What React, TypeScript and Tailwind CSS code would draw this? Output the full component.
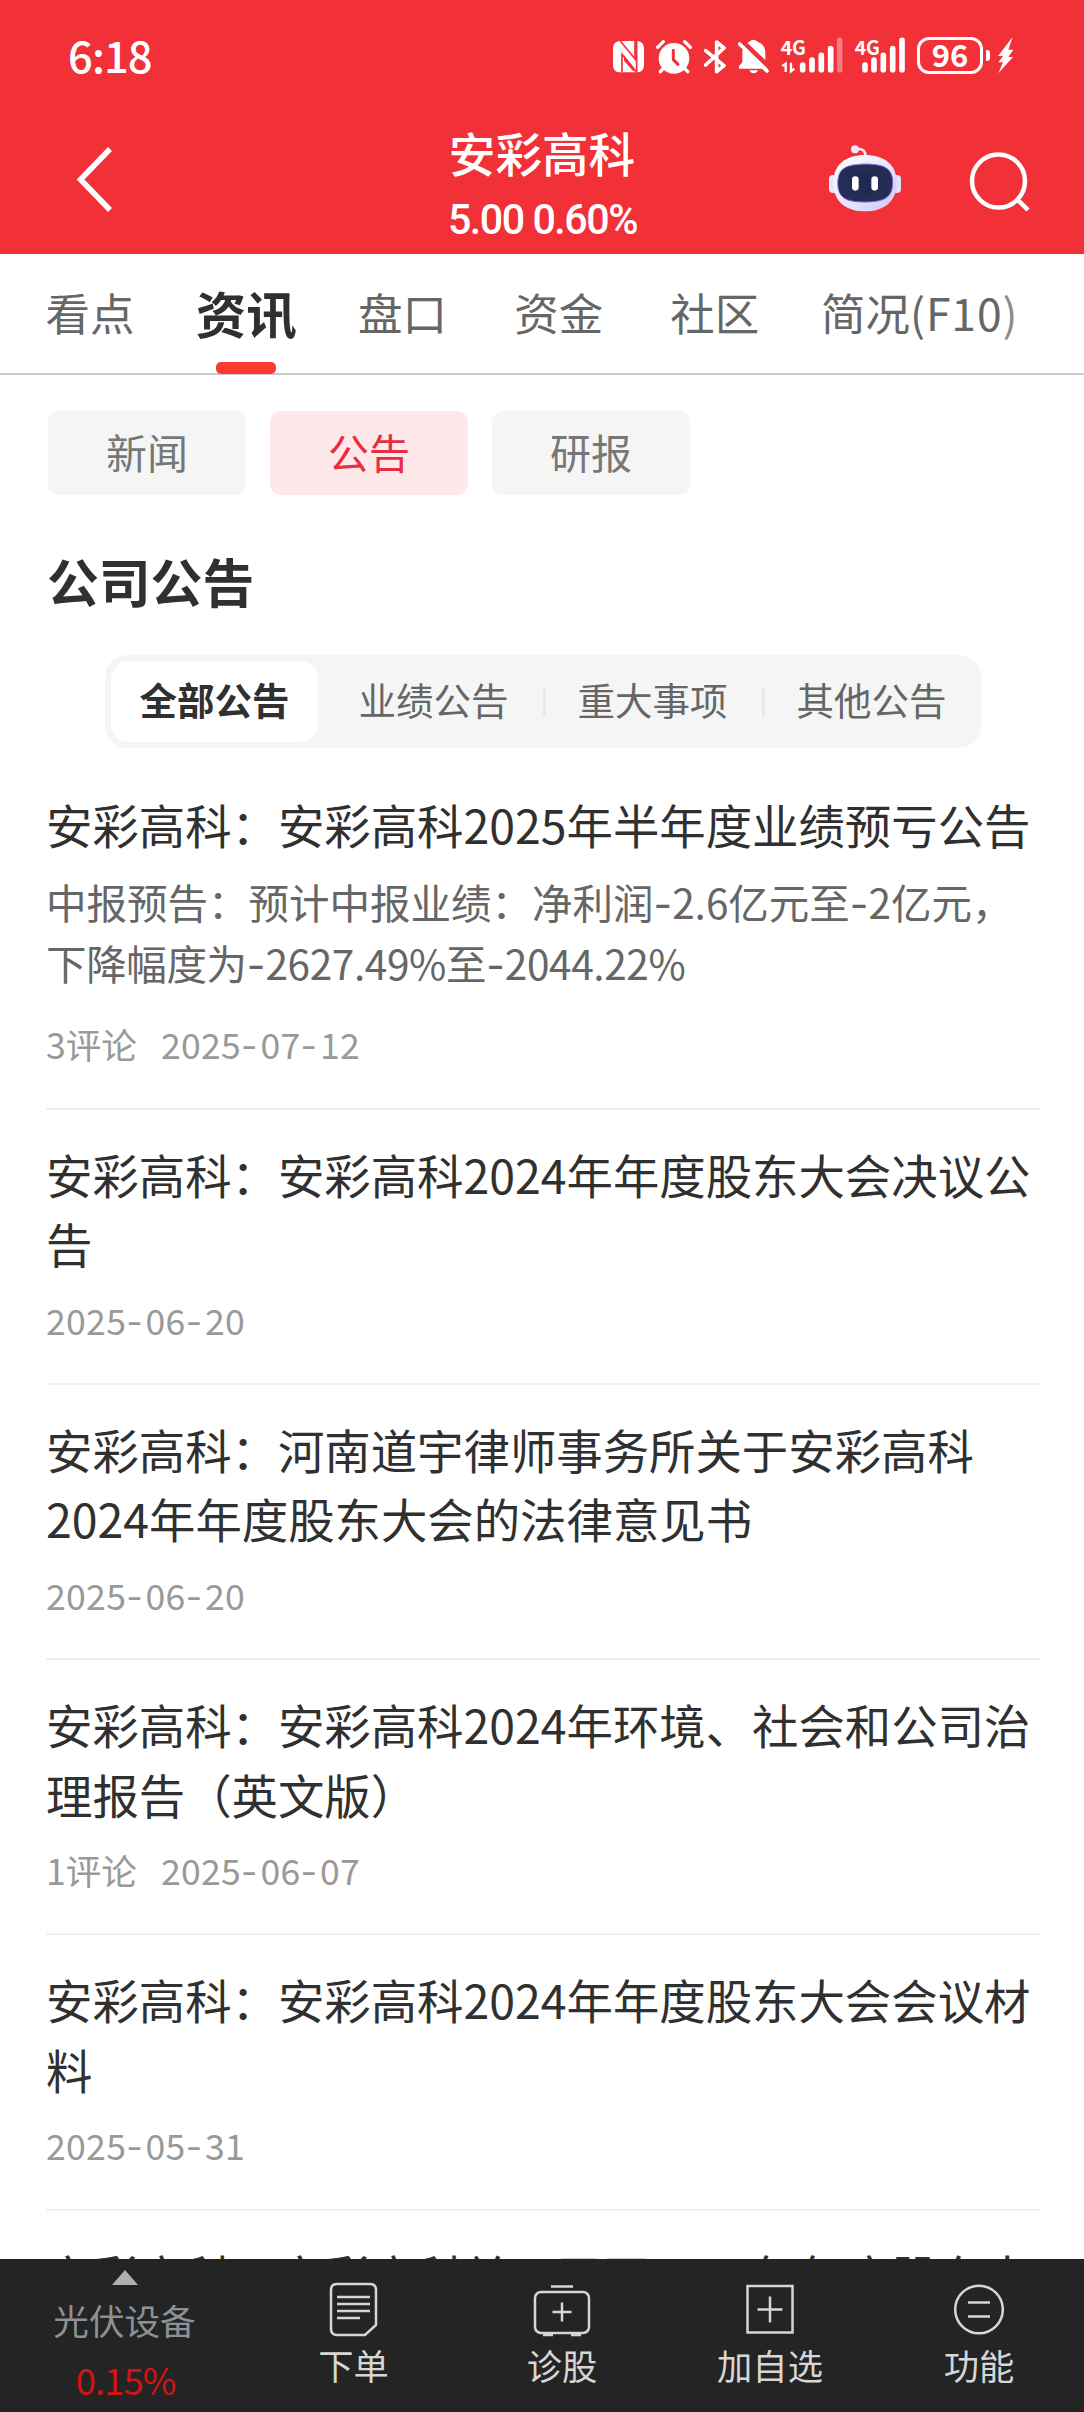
import React from "react";

const Hy = ({ s }: { s: string }) => (
  <span className={`font-['Inter'] leading-none ${s}`}>-</span>
);

const withHyphens = (t: string, s: string) =>
  t.split("-").map((p, i) => (
    <React.Fragment key={i}>
      {i > 0 && <Hy s={s} />}
      {p}
    </React.Fragment>
  ));

function StatusBar() {
  return (
    <div className="flex h-[104px] items-start pl-[68px] pt-[36px] text-white">
      <div className="-mt-[1px] h-[41px] w-[545px] text-[43.500px] font-medium leading-[40px] tracking-[-0.900px]">6:18</div>
      <svg className="mt-[4px] h-[33px] w-[31px]" viewBox="0 0 93 99">
        <rect x="0" y="3" width="93" height="94" rx="20" fill="#fff" />
        <path d="M22 3L66 57V3M71 3V97L27 43V97" fill="none" stroke="#f23037" strokeWidth="5" />
        <path d="M33 46L62 82V95L33 62z" fill="#f23037" />
      </svg>
      <svg className="ml-[12px] mt-[3px] h-[35px] w-[36px]" viewBox="0 0 108 105">
        <circle cx="54" cy="58" r="46" fill="#fff" />
        <path d="M5 25L22 8M103 25L86 8M24 86L13 98M84 86l11 12" stroke="#fff" strokeWidth="10" strokeLinecap="round" />
        <path d="M52 34v28l14 14" fill="none" stroke="#f23037" strokeWidth="9" strokeLinecap="round" />
      </svg>
      <svg className="ml-[12px] mt-[3px] h-[35px] w-[22px]" viewBox="0 0 66 105">
        <path d="M5 35L60 80 38 98V9L60 27 5 78" fill="none" stroke="#fff" strokeWidth="11" strokeLinecap="round" strokeLinejoin="round" />
      </svg>
      <svg className="ml-[12px] mt-[3px] h-[35px] w-[31px]" viewBox="0 0 93 105">
        <path d="M3 89V82L13 70V38Q15 14 34 8Q46-4 59 8Q82 16 82 42V68L90 82V89z" fill="#fff" />
        <path d="M10 4L95 85" stroke="#f23037" strokeWidth="14" />
        <path d="M5 15L87 96" stroke="#fff" strokeWidth="11" strokeLinecap="round" />
        <path d="M34 94h26q-4 9-13 9t-13-9" fill="#fff" />
      </svg>
      <svg className="ml-[12px] mt-[1px] h-[37px] w-[62px] overflow-visible" viewBox="0 0 186 111">
        <text x="-1" y="54" fontSize="59" fontWeight="700" fill="#fff" textLength="76" lengthAdjust="spacingAndGlyphs">4G</text>
        <path d="M14 105V80L4 87M30 77v26l10-8" fill="none" stroke="#fff" strokeWidth="7" />
        <path d="M65 84v14M93 69v29M121 55v43M149 35v63" stroke="#fff" strokeWidth="17" strokeLinecap="round" />
        <path d="M176 10v88" stroke="#f97a7f" strokeWidth="17" strokeLinecap="round" />
      </svg>
      <svg className="ml-[12px] mt-[1px] h-[37px] w-[50px] overflow-visible" viewBox="0 0 150 111">
        <text x="-1" y="54" fontSize="59" fontWeight="700" fill="#fff" textLength="76" lengthAdjust="spacingAndGlyphs">4G</text>
        <path d="M30 84v14M57 69v29M85 55v43M113 35v63M141 10v88" stroke="#fff" strokeWidth="17" strokeLinecap="round" />
      </svg>
      <div className="ml-[12px] mt-[1px] flex h-[37px] w-[66px] items-center justify-center rounded-[12px] border-[3px] border-white pb-[3px] text-[31px] font-bold leading-[30px]">96</div>
      <div className="ml-[3px] mt-[14px] h-[11px] w-[4px] rounded-r-[3px] bg-white" />
      <svg className="ml-[7px] mt-[1px] h-[37px] w-[17px]" viewBox="0 0 51 111">
        <path d="M47 0L3 57H18L4 76H18L4 109 48 60H34L49 38H34z" fill="#fff" />
      </svg>
    </div>
  );
}

function Robot() {
  return (
    <svg className="h-[68px] w-[73px]" viewBox="0 0 219 204">
      <defs>
        <linearGradient id="shell" x1="0" y1="0" x2="1" y2="1">
          <stop offset="0" stopColor="#ffffff" />
          <stop offset=".6" stopColor="#e6e2fb" />
          <stop offset="1" stopColor="#c6c6f7" />
        </linearGradient>
        <linearGradient id="rim" x1="0" y1="0" x2="1" y2="1">
          <stop offset="0" stopColor="#a9d8ee" />
          <stop offset=".5" stopColor="#7a3fe0" />
          <stop offset="1" stopColor="#7d7df0" />
        </linearGradient>
        <radialGradient id="visor">
          <stop offset="0" stopColor="#1c2950" />
          <stop offset="1" stopColor="#272e55" />
        </radialGradient>
      </defs>
      <path d="M80 12Q110 8 110 36" fill="none" stroke="#efe6f8" strokeWidth="8" />
      <circle cx="78" cy="13" r="12" fill="#efe6f8" />
      <rect x="0" y="90" width="28" height="54" rx="12" fill="#e9e6fa" />
      <rect x="188" y="90" width="28" height="54" rx="12" fill="#e0defa" />
      <path d="M108 30C165 30 203 58 203 113C203 170 165 199 108 199S13 170 13 113C13 58 51 30 108 30z" fill="url(#shell)" />
      <path d="M108 57C168 57 191 72 191 113C191 156 168 171 108 171S26 156 26 113C26 72 48 57 108 57z" fill="url(#visor)" stroke="url(#rim)" strokeWidth="3" />
      <rect x="69" y="94" width="20" height="43" rx="10" fill="#fff" />
      <rect x="127" y="94" width="20" height="43" rx="10" fill="#fff" />
    </svg>
  );
}

function NavBar() {
  return (
    <div className="flex h-[150px] items-start text-white">
      <div className="w-[362px] pl-[72px] pt-[40px]">
        <svg className="h-[72px] w-[44px]" viewBox="0 0 44 72" fill="none" stroke="#fff" strokeWidth="5.500">
          <path d="M38 5L8.500 35.500L38 66" />
        </svg>
      </div>
      <div className="flex w-[360px] flex-col items-center">
        <div className="mt-[19px] text-[46.600px] font-medium leading-[58px]">安彩高科</div>
        <div className="mt-[15px] whitespace-nowrap font-['Roboto'] text-[42px] font-medium leading-[48px] tracking-[-1.500px]"><span className="inline-block origin-center scale-x-[0.98]">5.00 0.60%</span></div>
      </div>
      <div className="ml-[107px] mt-[41px]"><Robot /></div>
      <svg className="ml-[66px] mt-[46px] h-[64px] w-[64px]" viewBox="0 0 64 64" fill="none" stroke="#fff" strokeWidth="4.500">
        <circle cx="30.500" cy="31" r="26.500" />
        <path d="M49 49L60 60" />
      </svg>
    </div>
  );
}

function Tabs() {
  return (
    <div className="flex h-[121px] items-start border-b-2 border-[#cacaca] pl-[12px] text-[44.500px] leading-[60px] text-[#666]">
      {["看点", "资讯", "盘口", "资金", "社区"].map((t, i) => (
        <div key={t} className="flex h-[119px] w-[156.200px] flex-col items-center pt-[28px]">
          {i === 1 ? (
            <>
              <div className="text-[50.500px] font-bold text-[#303030]">{t}</div>
              <div className="mt-[20px] h-[12px] w-[60px] shrink-0 rounded-[5px] bg-[#fb3b30]" />
            </>
          ) : (
            t
          )}
        </div>
      ))}
      <div className="whitespace-nowrap pl-[28px] pt-[28px]">
        简况<span className="tracking-[0.900px]">(F10<span className="text-[#8c8c8c]">)</span></span>
      </div>
    </div>
  );
}

function Chips() {
  return (
    <div className="mt-[36px] flex gap-[24px] pl-[48px] text-[41px] leading-[80px]">
      <div className="h-[84px] w-[198px] rounded-[11px] bg-[#f5f5f5] text-center text-[#777]">新闻</div>
      <div className="h-[84px] w-[198px] rounded-[11px] bg-[#ffe8ea] text-center text-[#e72e3f]">公告</div>
      <div className="h-[84px] w-[198px] rounded-[11px] bg-[#f5f5f5] text-center text-[#777]">研报</div>
    </div>
  );
}

function Segments() {
  return (
    <div className="ml-[105px] mt-[38px] flex h-[93px] w-[876px] items-center rounded-[22px] bg-[#f5f5f5] text-[37.500px] text-[#666]">
      <div className="flex w-[219px] justify-center">
        <div className="h-[81px] w-[207px] rounded-[18px] bg-white text-center font-bold leading-[75px] text-[#303030]">全部公告</div>
      </div>
      {["业绩公告", "重大事项", "其他公告"].map((t, i) => (
        <div key={t} className="flex w-[219px] items-center">
          <div className={i ? "h-[30px] w-[3px] bg-[#e8e8e8]" : "h-[30px] w-[3px]"} />
          <div className="-mt-[6px] w-[213px] text-center leading-[81px]">{t}</div>
        </div>
      ))}
    </div>
  );
}

type Item = { title: string[]; desc?: string[]; comments?: string; date?: string };
const items: Item[] = [
  {
    title: ["安彩高科：安彩高科2025年半年度业绩预亏公告"],
    desc: ["中报预告：预计中报业绩：净利润-2.6亿元至-2亿元，", "下降幅度为-2627.49%至-2044.22%"],
    comments: "3评论",
    date: "2025-07-12",
  },
  { title: ["安彩高科：安彩高科2024年年度股东大会决议公", "告"], date: "2025-06-20" },
  { title: ["安彩高科：河南道宇律师事务所关于安彩高科", "2024年年度股东大会的法律意见书"], date: "2025-06-20" },
  { title: ["安彩高科：安彩高科2024年环境、社会和公司治", "理报告（英文版）"], comments: "1评论", date: "2025-06-07" },
  { title: ["安彩高科：安彩高科2024年年度股东大会会议材", "料"], date: "2025-05-31" },
  { title: ["安彩高科：安彩高科关于召开2024年年度股东大"] },
];

function Row({ item }: { item: Item }) {
  const lead = !!item.desc;
  return (
    <div className={`ml-[46px] mr-[44px] shrink-0 whitespace-nowrap border-b-2 border-[#f0f0f0] ${lead ? "h-[361.500px]" : "h-[275.250px]"}`}>
      <div className={`text-[46.400px] leading-[69.500px] text-[#303030] ${lead ? "pt-[41px]" : "pt-[29px]"}`}>
        {item.title.map((l) => (
          <div key={l}>{l}</div>
        ))}
      </div>
      {item.desc && (
        <div className="mt-[12px] text-[40.500px] leading-[61px] text-[#666]">
          <div>{withHyphens(item.desc[0], "tracking-[0px]")}</div>
          <div className="tracking-[-0.350px]">{withHyphens(item.desc[1], "tracking-[0px]")}</div>
        </div>
      )}
      {item.date && (
        <div className={`flex gap-[24px] text-[35.600px] leading-[50px] text-[#999] ${lead ? "mt-[26px]" : "mt-[17px]"}`}>
          {item.comments && <span>{item.comments}</span>}
          <span className="tracking-[0.300px]">{withHyphens(item.date, "tracking-[3px]")}</span>
        </div>
      )}
    </div>
  );
}

function BottomBar() {
  const s = { fill: "none", stroke: "#d6d6d6", strokeWidth: 2.5 };
  const label = "mt-[4px] text-[35.300px] leading-[44px]";
  return (
    <div className="flex h-[153px] shrink-0 bg-[#242424] text-[#d6d6d6]">
      <div className="flex w-[249px] flex-col items-center">
        <svg className="mt-[11px] h-[15px] w-[26px]" viewBox="0 0 26 15"><path d="M13 0L26 15H0z" fill="#b0b0b0" /></svg>
        <div className="mt-[13px] text-[35.600px] leading-[44px] text-[#8b9196]">光伏设备</div>
        <div className="mt-[16px] pl-[2px] text-[36.500px] leading-[44px] tracking-[-1px] text-[#d01414]">0.15%</div>
      </div>
      <div className="flex w-[209px] flex-col items-center">
        <svg className="mt-[22px] h-[58px] w-[50px]" viewBox="0 0 50 58" {...s}>
          <path d="M8 3H41Q47 3 47 9V44L36 54H8Q2 54 2 48V9Q2 3 8 3zM8 16H41M8 23H41M8 30H41M8 37H31" />
        </svg>
        <div className={label}>下单</div>
      </div>
      <div className="flex w-[208px] flex-col items-center">
        <svg className="mt-[22px] h-[58px] w-[60px]" viewBox="0 0 60 58" {...s}>
          <rect x="3" y="11" width="54" height="41" rx="6" />
          <path d="M19 5.500H41M20.500 31H39.500M30 21.500V40.500M11 54H21M39 54H49" />
        </svg>
        <div className={label}>诊股</div>
      </div>
      <div className="flex w-[208px] flex-col items-center">
        <svg className="mt-[22px] h-[58px] w-[50px]" viewBox="0 0 50 58" {...s}>
          <path d="M2.500 5H47.500V51.500H2.500zM12.500 28.500H37.500M25 15.500V41.500" />
        </svg>
        <div className={label}>加自选</div>
      </div>
      <div className="flex w-[210px] flex-col items-center">
        <svg className="mt-[22px] h-[58px] w-[50px]" viewBox="0 0 50 58" {...s}>
          <circle cx="25" cy="28.500" r="23.800" />
          <path d="M14 21.500H36M14 35.500H36" />
        </svg>
        <div className={label}>功能</div>
      </div>
    </div>
  );
}

export default function App() {
  return (
    <div className="flex h-[2412px] w-[1084px] flex-col overflow-hidden bg-white font-['Noto_Sans_CJK_SC',sans-serif]">
      <div className="h-[254px] shrink-0 bg-[#f23037]">
        <StatusBar />
        <NavBar />
      </div>
      <div className="flex min-h-0 flex-1 flex-col overflow-hidden">
        <div className="h-[494px] shrink-0">
          <Tabs />
          <Chips />
          <div className="ml-[47px] mt-[50px] text-[51.800px] font-bold leading-[72px] text-[#303030]">公司公告</div>
          <Segments />
        </div>
        {items.map((item, i) => (
          <Row key={i} item={item} />
        ))}
      </div>
      <BottomBar />
    </div>
  );
}
